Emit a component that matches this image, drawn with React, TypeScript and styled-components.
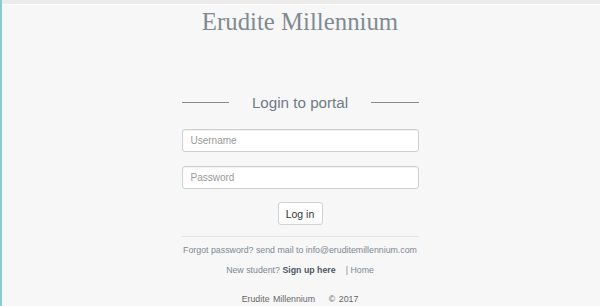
import styled, { createGlobalStyle } from "styled-components";

const GlobalStyle = createGlobalStyle`
  html, body {
    margin: 0;
    padding: 0;
    background: #f7f7f7;
  }
  * { box-sizing: border-box; }
`;

const Page = styled.div`
  min-height: 306px;
  box-shadow: inset 2px 0 #8ec9cf;
  background: #f7f7f7;
  font-family: "Liberation Sans", Arial, sans-serif;
  display: flex;
  flex-direction: column;
  align-items: center;
`;

const TopBar = styled.div`
  align-self: stretch;
  margin-left: 2px;
  height: 5px;
  background: #ebebeb;
  border-bottom: 1px solid #fdfdfd;
`;

const Brand = styled.h1`
  margin: 3px 0 0;
  font-family: "Liberation Serif", "Times New Roman", serif;
  font-weight: normal;
  font-size: 24.8px;
  line-height: 28px;
  color: #7f8a93;
`;

const LoginBox = styled.div`
  width: 237px;
  margin-top: 55px;
  display: flex;
  flex-direction: column;
  align-items: center;
`;

const Heading = styled.div`
  width: 100%;
  display: flex;
  align-items: center;
  gap: 23px;
  height: 22px;
`;

const Rule = styled.span`
  flex: 1;
  height: 1px;
  background: #8a8a8a;
`;

const HeadingText = styled.h2`
  margin: 0;
  font-weight: normal;
  font-size: 15.2px;
  color: #6f7b87;
  white-space: nowrap;
`;

const Field = styled.input<{ $gap?: number }>`
  width: 100%;
  height: 23px;
  margin-top: ${(p) => p.$gap ?? 14}px;
  padding: 0 8px;
  border: 1px solid #cfcfcf;
  border-radius: 3px;
  background: #fff;
  font-family: "Liberation Sans", Arial, sans-serif;
  font-size: 10px;
  color: #555;
  box-shadow: inset 0 1px 1px rgba(0, 0, 0, 0.06);
  &::placeholder {
    color: #9a9a9a;
  }
`;

const Button = styled.button`
  margin-top: 13px;
  height: 23px;
  width: 45px;
  padding: 0;
  border: 1px solid #d2d2d2;
  border-radius: 3px;
  background: #fff;
  font-family: "Liberation Sans", Arial, sans-serif;
  font-size: 10.5px;
  color: #333;
`;

const Divider = styled.hr`
  width: 100%;
  margin: 11px 0 0;
  border: 0;
  border-top: 1px solid #e3e3e3;
`;

const Note = styled.p<{ $gap?: number }>`
  margin: ${(p) => p.$gap ?? 6}px 0 0;
  font-size: 8.8px;
  line-height: 14px;
  color: #7c8894;
  white-space: nowrap;
  text-align: center;
`;

const Strong = styled.b`
  color: #4d5966;
  margin-right: 10px;
`;

const Footer = styled.p`
  margin: 15px 0 0;
  font-size: 8.8px;
  line-height: 14px;
  color: #666;
  word-spacing: 1px;
`;

export default function App() {
  return (
    <>
      <GlobalStyle />
      <Page>
        <TopBar />
        <Brand>Erudite Millennium</Brand>
        <LoginBox>
          <Heading>
            <Rule />
            <HeadingText>Login to portal</HeadingText>
            <Rule />
          </Heading>
          <Field $gap={16} type="text" placeholder="Username" />
          <Field type="password" placeholder="Password" />
          <Button>Log in</Button>
          <Divider />
          <Note>Forgot password? send mail to info@eruditemillennium.com</Note>
          <Note>
            New student? <Strong>Sign up here</Strong>| Home
          </Note>
        </LoginBox>
        <Footer>Erudite Millennium &nbsp;&nbsp;&nbsp;© 2017</Footer>
      </Page>
    </>
  );
}
